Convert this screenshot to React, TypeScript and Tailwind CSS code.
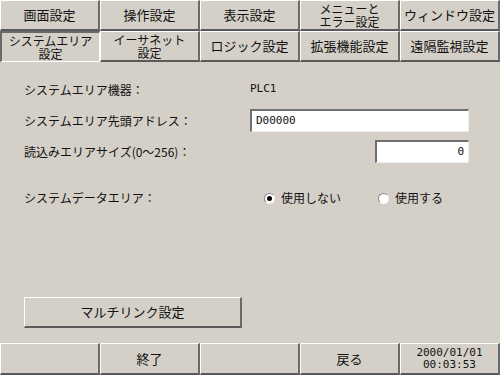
import React from 'react';

const raised =
  'border-t border-l border-t-white border-l-white border-b-2 border-r-2 border-b-[#5a5a5a] border-r-[#6a6a6a] bg-[#d4d0c8]';
const sunkenTab =
  'border-t-2 border-l-2 border-t-[#6a6a6a] border-l-[#6a6a6a] border-b border-r border-b-white border-r-white bg-[#d4d0c8]';
const field =
  'bg-white border-t-2 border-l-2 border-t-[#6f6f6f] border-l-[#6f6f6f] border-b border-r border-b-[#ececec] border-r-[#ececec]';

const jp = { fontFamily: '"MS UI Gothic", "Noto Sans CJK JP", sans-serif' };
const mono = { fontFamily: '"DejaVu Sans Mono", "Liberation Mono", monospace' };

const topTabs = [['画面設定'], ['操作設定'], ['表示設定'], ['メニューと', 'エラー設定'], ['ウィンドウ設定']];
const subTabs = [['システムエリア', '設定'], ['イーサネット', '設定'], ['ロジック設定'], ['拡張機能設定'], ['遠隔監視設定']];

const Tab: React.FC<{ lines: string[]; active?: boolean }> = ({ lines, active }) => (
  <div
    className={`h-[31px] flex flex-col items-center justify-center text-[#111] ${
      lines.length > 1 ? 'text-[12px] leading-[13px]' : 'text-[13px]'
    } ${active ? sunkenTab : raised}`}
  >
    {lines.map((l) => (
      <span key={l}>{l}</span>
    ))}
  </div>
);

const Radio: React.FC<{ checked?: boolean }> = ({ checked }) => (
  <span className="w-[11px] h-[11px] rounded-full bg-white border border-t-[#8a8a8a] border-l-[#8a8a8a] border-b-[#f4f4f4] border-r-[#f4f4f4] flex items-center justify-center">
    {checked && <span className="w-[5px] h-[5px] rounded-full bg-black" />}
  </span>
);

const App: React.FC = () => {
  return (
    <div className="w-[500px] h-[375px] bg-[#d4d0c8] flex flex-col text-[#111]" style={jp}>
      <div className="grid grid-cols-5">
        {topTabs.map((t) => (
          <Tab key={t.join()} lines={t} />
        ))}
        {subTabs.map((t, i) => (
          <Tab key={t.join()} lines={t} active={i === 0} />
        ))}
      </div>

      <div className="flex-1 flex flex-col pl-6 pr-[31px] text-[12px]">
        <div className="flex items-center h-[21px] mt-[17px]">
          <span className="w-[226px]">システムエリア機器：</span>
          <span className="text-[11px]" style={mono}>PLC1</span>
        </div>
        <div className="flex items-center h-[23px] mt-[9px]">
          <span className="w-[226px]">システムエリア先頭アドレス：</span>
          <div className={`flex-1 h-[23px] flex items-center px-1 text-[11px] ${field}`} style={mono}>
            D00000
          </div>
        </div>
        <div className="flex items-center h-[23px] mt-[8px]">
          <span className="flex-1">読込みエリアサイズ(0〜256)：</span>
          <div className={`w-[94px] h-[23px] flex items-center justify-end px-1 text-[11px] ${field}`} style={mono}>
            0
          </div>
        </div>
        <div className="flex items-center h-[20px] mt-[25px]">
          <span className="w-[240px]">システムデータエリア：</span>
          <Radio checked />
          <span className="ml-[6px] w-[97px]">使用しない</span>
          <Radio />
          <span className="ml-[6px]">使用する</span>
        </div>
        <div className="flex-1" />
        <div className={`w-[218px] h-[31px] mb-[15px] flex items-center justify-center text-[13px] ${raised}`}>
          マルチリンク設定
        </div>
      </div>

      <div className="grid grid-cols-5 h-[32px]">
        <div className={raised} />
        <div className={`flex items-center justify-center text-[13px] ${raised}`}>終了</div>
        <div className={raised} />
        <div className={`flex items-center justify-center text-[13px] ${raised}`}>戻る</div>
        <div
          className={`flex flex-col items-center justify-center text-[11px] leading-[12px] ${raised}`}
          style={mono}
        >
          <span>2000/01/01</span>
          <span>00:03:53</span>
        </div>
      </div>
    </div>
  );
};

export default App;
